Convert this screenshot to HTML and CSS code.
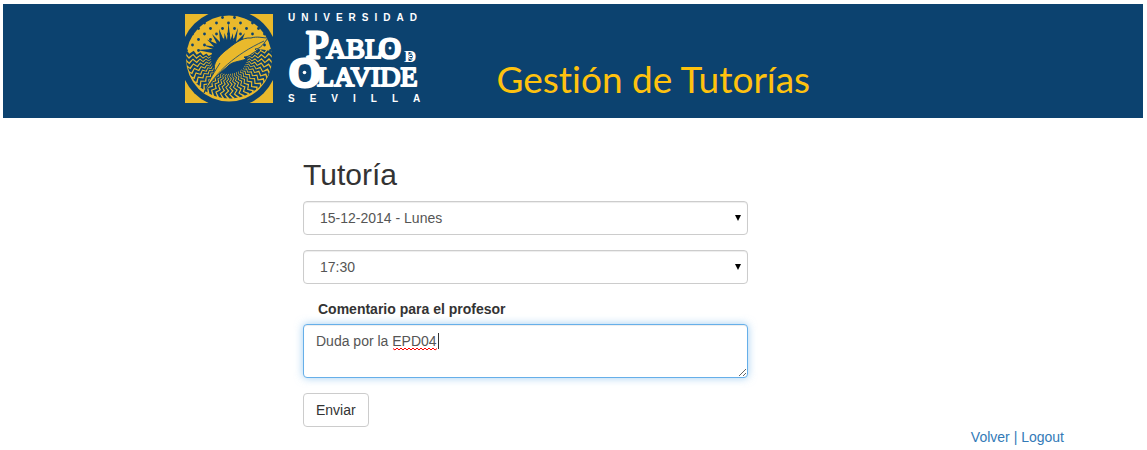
FILE: index.html
```html
<!DOCTYPE html>
<html lang="es">
<head>
<meta charset="utf-8">
<meta name="viewport" content="width=device-width, initial-scale=1">
<title>Gestión de Tutorías</title>
<link rel="stylesheet" href="styles.css">
</head>
<body>
<header class="banner">
  <svg class="logo" width="250" height="96" viewBox="0 -2 250 96" role="img" aria-label="Universidad Pablo de Olavide, Sevilla">
    <defs>
      <clipPath id="square"><rect width="88" height="89"/></clipPath>
      <clipPath id="sea"><path d="M1 38Q10 33 21 37Q32 40 44 38Q56 35 66 38Q77 33 88 38A43 43 0 0 1 1 44Z"/></clipPath>
      <pattern id="dots" width="12" height="11" patternUnits="userSpaceOnUse">
        <circle cx="7.500" cy="9" r="1.400" fill="#0c426f"/><circle cx="1.500" cy="3.500" r="1.400" fill="#0c426f"/>
      </pattern>
      <path id="ray" d="M44 3.800L40-.5L36 3.200L32.500-.4L29 2.600L26-.3L23 2L20.500-.2L18 1.600L16 0L14 1V-.4L16-1.400L18-.2L20.500-1.900L23 0L26-2.400L29 0L32.500-3L36 0L40-3.700L44 .3Z"/>
      <g id="rays">
        <use href="#ray"/><use href="#ray" transform="rotate(7.500)"/><use href="#ray" transform="rotate(15)"/><use href="#ray" transform="rotate(22.500)"/>
      </g>
    </defs>
    <g clip-path="url(#square)">
      <rect width="88" height="89" fill="#e9b92c"/>
      <circle cx="44" cy="44.500" r="49" fill="#0c426f"/>
      <circle cx="44" cy="44.500" r="43" fill="#e9b92c"/>
      <path d="M1 38A43 43 0 0 1 87 38Z" fill="url(#dots)"/>
      <g clip-path="url(#sea)">
        <g transform="translate(44 44.500)" fill="#0c426f">
          <use href="#rays" transform="rotate(-15)"/><use href="#rays" transform="rotate(15)"/><use href="#rays" transform="rotate(45)"/><use href="#rays" transform="rotate(75)"/><use href="#rays" transform="rotate(105)"/><use href="#rays" transform="rotate(135)"/><use href="#rays" transform="rotate(165)"/>
        </g>
      </g>
      <path fill="#0c426f" d="M12 36L28 35L18 31L29 32.500L22 25.500L32 30L27 20L35 28L34 15L39 26.500L39.500 19L42 26L43.500 9L45.500 26L48 19L48 27L53 14L51 28L60 19L56 29L64 28L60 34C65 42 62 51 56 56C49 61 37 61 31 57C26 52 25 44 27 39Z"/>
      <path fill="#e9b92c" stroke="#0c426f" stroke-width=".9" stroke-linejoin="round" d="M19 79C22 70 27 62 30 57C27 50 34 42 40 37C49 30 57 23 66 24C72 22 78 24 83 24C79 29 76 35 70 35L72 37C66 39 65 43 59 43L61 45C54 48 47 47 42 53C34 59 26 68 19 79Z"/>
      <path fill="none" stroke="#0c426f" stroke-width=".8" d="M30 57L35 49M20 77C32 58 49 41 79 27"/>
    </g>
    <g fill="#fff" aria-hidden="true">
      <text class="logo-caps wide" x="103" y="7">UNIVERSIDAD</text>
      <g class="logo-name">
        <text class="initial" x="121" y="44">P</text>
        <text class="capitals" x="141" y="44">ABL</text>
        <text class="round" x="194" y="44">O</text>
        <text class="initial ring" x="105" y="72">O</text>
        <text class="capitals" x="132" y="72">LAVIDE</text>
      </g>
      <text class="logo-small" x="219" y="48">D</text>
      <text class="logo-caps wider" x="103" y="88">SEVILLA</text>
      <circle cx="205" cy="34" r="1.500"/>
      <circle cx="119.500" cy="58.500" r="1.800"/>
    </g>
    <path d="M228 41A2.500 2.500 0 1 0 228 44M224 42.500H227" fill="none" stroke="#fff"/>
  </svg>
  <p class="app-title">Gestión de Tutorías</p>
</header>
<main class="page">
  <form class="form">
    <h2>Tutoría</h2>
    <div class="field">
      <select class="control" aria-label="Fecha"><option>15-12-2014 - Lunes</option></select>
      <svg class="arrow" width="6" height="6" viewBox="0 0 6 6" aria-hidden="true"><path d="M0 0H6L3 6Z"/></svg>
    </div>
    <div class="field">
      <select class="control" aria-label="Hora"><option>17:30</option></select>
      <svg class="arrow" width="6" height="6" viewBox="0 0 6 6" aria-hidden="true"><path d="M0 0H6L3 6Z"/></svg>
    </div>
    <label for="comentario">Comentario para el profesor</label>
    <div class="field">
      <textarea class="control comment" id="comentario" rows="2" spellcheck="false">Duda por la EPD04</textarea>
      <svg class="spelling" width="46" height="18" viewBox="0 0 46 18" aria-hidden="true">
        <path d="M0 15.500L2 17L4 15L6 17L8 15L10 17L12 15L14 17L16 15L18 17L20 15L22 17L24 15L26 17L28 15L30 17L32 15L34 17L36 15L38 17L40 15L42 17L44 15.500" fill="none" stroke="#f00"/>
        <path d="M45 0H46V16H45Z" fill="#333"/>
      </svg>
    </div>
    <button class="submit" type="button">Enviar</button>
  </form>
  <nav class="links"><a href="#volver">Volver</a> | <a href="#logout">Logout</a></nav>
</main>
</body>
</html>
```
FILE: styles.css
```css
* { box-sizing: border-box; }
body {
  margin: 4px 4px 0 3px;
  background: #fff;
  color: #333;
  font: 14px/20px "Liberation Sans", Arial, sans-serif;
}
.banner {
  display: flex;
  align-items: flex-start;
  gap: 61px;
  padding: 8px 16% 10px;
  background: #0c426f;
}
.logo { flex: none; display: block; }
.logo-caps { font: bold 10px "Liberation Sans", Arial, sans-serif; }
.wide { letter-spacing: 6px; }
.wider { letter-spacing: 15px; }
.logo-name {
  font-family: "Liberation Serif", serif;
  stroke: #fff;
  stroke-width: 3;
  stroke-linejoin: round;
}
.initial { font-size: 41px; }
.ring { stroke-width: 5; }
.capitals { font-size: 28px; stroke-width: 2; }
.round { font-size: 30px; }
.logo-small { font: bold 17px "Liberation Serif", serif; }
.app-title {
  margin: 45px 0 0;
  color: #ffc20e;
  font: 37px/44px Lato, sans-serif;
  font-variant-ligatures: none;
  white-space: nowrap;
}
.page {
  display: grid;
  grid-template-columns: 300fr 445fr 395fr;
  padding-top: 40px;
}
.form { grid-column: 2; }
h2 { margin: 0 0 10px; font-size: 30px; font-weight: 500; line-height: 33px; }
.field { position: relative; margin-bottom: 15px; }
.control {
  display: block;
  width: 100%;
  height: 34px;
  margin: 0;
  padding: 6px 16px;
  border: 1px solid #ccc;
  border-radius: 4px;
  outline: 0;
  appearance: none;
  background: #fff;
  box-shadow: inset 0 1px 1px rgba(0, 0, 0, .075);
  color: #555;
  font: inherit;
}
.arrow { position: absolute; top: 14px; right: 7px; pointer-events: none; }
label { display: block; margin-bottom: 5px; padding-left: 15px; font-weight: bold; }
.comment {
  height: 54px;
  padding: 6px 12px;
  border-color: #66afe9;
  box-shadow: inset 0 1px 1px rgba(0, 0, 0, .075), 0 0 8px rgba(102, 175, 233, .6);
}
.spelling { position: absolute; top: 9px; left: 90px; pointer-events: none; }
.submit {
  display: block;
  padding: 6px 12px;
  border: 1px solid #ccc;
  border-radius: 4px;
  background: #fff;
  color: #333;
  font: inherit;
}
.links { grid-column: 3; grid-row: 2; justify-self: end; padding-right: 79px; color: #337ab7; }
.links a { color: inherit; text-decoration: none; }
```
